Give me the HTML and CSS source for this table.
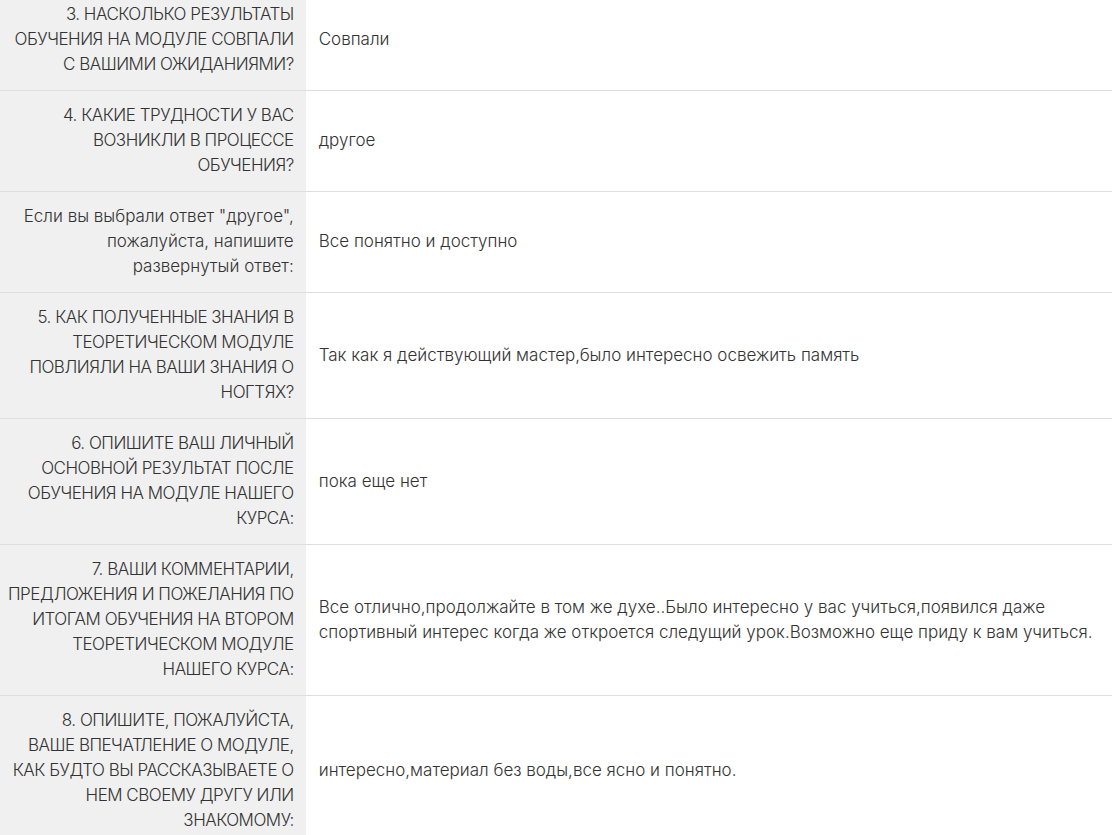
FILE: index.html
```html
<!DOCTYPE html>
<html lang="ru">
  <head>
    <meta charset="UTF-8" />
    <meta name="viewport" content="width=device-width, initial-scale=1.0" />
    <title>Ответы</title>
    <link rel="stylesheet" href="styles.css">
  </head>
  <body>
    <table class="answers">
      <tr>
        <th>3. НАСКОЛЬКО РЕЗУЛЬТАТЫ ОБУЧЕНИЯ НА МОДУЛЕ СОВПАЛИ С ВАШИМИ ОЖИДАНИЯМИ?</th>
        <td>Совпали</td>
      </tr>
      <tr>
        <th>4. КАКИЕ ТРУДНОСТИ У ВАС ВОЗНИКЛИ В ПРОЦЕССЕ ОБУЧЕНИЯ?</th>
        <td>другое</td>
      </tr>
      <tr>
        <th class="note">Если вы выбрали ответ "другое",<br>пожалуйста, напишите<br>развернутый ответ:</th>
        <td>Все понятно и доступно</td>
      </tr>
      <tr>
        <th>5. КАК ПОЛУЧЕННЫЕ ЗНАНИЯ В ТЕОРЕТИЧЕСКОМ МОДУЛЕ ПОВЛИЯЛИ НА ВАШИ ЗНАНИЯ О НОГТЯХ?</th>
        <td>Так как я действующий мастер,было интересно освежить память</td>
      </tr>
      <tr>
        <th>6. ОПИШИТЕ ВАШ ЛИЧНЫЙ ОСНОВНОЙ РЕЗУЛЬТАТ ПОСЛЕ ОБУЧЕНИЯ НА МОДУЛЕ НАШЕГО КУРСА:</th>
        <td>пока еще нет</td>
      </tr>
      <tr>
        <th>7. ВАШИ КОММЕНТАРИИ,<br><span class="line">ПРЕДЛОЖЕНИЯ И ПОЖЕЛАНИЯ ПО</span><br>ИТОГАМ ОБУЧЕНИЯ НА ВТОРОМ<br>ТЕОРЕТИЧЕСКОМ МОДУЛЕ<br>НАШЕГО КУРСА:</th>
        <td>Все отлично,продолжайте в том же духе..Было интересно у вас учиться,появился даже спортивный интерес когда же откроется следущий урок.Возможно еще приду к вам учиться.</td>
      </tr>
      <tr>
        <th>8. ОПИШИТЕ, ПОЖАЛУЙСТА,<br>ВАШЕ ВПЕЧАТЛЕНИЕ О МОДУЛЕ,<br>КАК БУДТО ВЫ РАССКАЗЫВАЕТЕ О НЕМ СВОЕМУ ДРУГУ ИЛИ ЗНАКОМОМУ:</th>
        <td>интересно,материал без воды,все ясно и понятно.</td>
      </tr>
    </table>
  </body>
</html>
```

FILE: styles.css
```css
html,
body {
  margin: 0;
  font-family: Inter, "Noto Sans", sans-serif;
  background: #fff;
  color: #333;
}

.answers {
  width: 100%;
  margin-top: -10px;
  border-collapse: collapse;
  font-size: 17px;
  line-height: 25px;
}

.answers tr {
  border-bottom: 1px solid #dedede;
}

.answers th {
  width: 285px;
  padding: 12px 12px 13px 8px;
  background: #f0f0f0;
  text-align: right;
  font-weight: 300;
  letter-spacing: -0.5px;
  vertical-align: middle;
}

.answers th.note {
  letter-spacing: 0;
}

.answers .line {
  white-space: nowrap;
}

.answers td {
  padding: 12px 14px 13px 13px;
  font-weight: 300;
  letter-spacing: 0;
  vertical-align: middle;
}
```
